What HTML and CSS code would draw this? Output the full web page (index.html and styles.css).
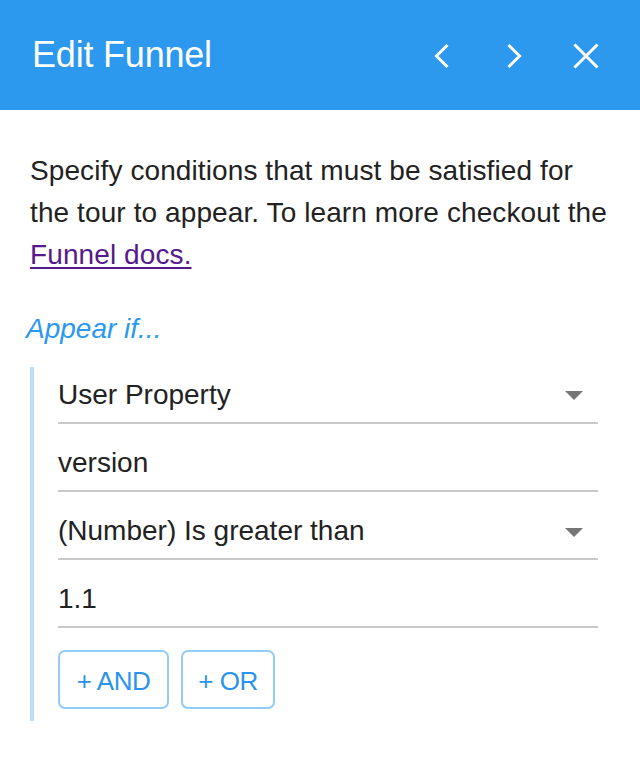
FILE: index.html
```html
<!DOCTYPE html>
<html lang="en">
<head>
<meta charset="utf-8">
<title>Edit Funnel</title>
<link rel="stylesheet" href="styles.css">
</head>
<body>
<div class="panel">
  <header class="header">
    <h1 class="title">Edit Funnel</h1>
    <div class="actions">
      <svg class="icon" width="28" height="28" viewBox="0 0 28 28"><polyline points="19.5,3 8.5,14 19.5,25" fill="none" stroke="#fff" stroke-width="3"/></svg>
      <svg class="icon" width="28" height="28" viewBox="0 0 28 28"><polyline points="8.5,3 19.5,14 8.5,25" fill="none" stroke="#fff" stroke-width="3"/></svg>
      <svg class="icon" width="28" height="28" viewBox="0 0 28 28"><path d="M2.5 2.5 L25.5 25.5 M25.5 2.5 L2.5 25.5" fill="none" stroke="#fff" stroke-width="3"/></svg>
    </div>
  </header>
  <main class="content">
    <p class="intro">Specify conditions that must be satisfied for the tour to appear. To learn more checkout the <a class="link" href="#">Funnel docs.</a></p>
    <div class="appear">Appear if...</div>
    <div class="group">
      <div class="field field-first">
        <span class="value">User Property</span>
        <span class="caret"></span>
      </div>
      <div class="field">
        <span class="value">version</span>
      </div>
      <div class="field">
        <span class="value">(Number) Is greater than</span>
        <span class="caret"></span>
      </div>
      <div class="field">
        <span class="value">1.1</span>
      </div>
      <div class="buttons">
        <button class="btn btn-and">+ AND</button>
        <button class="btn btn-or">+ OR</button>
      </div>
    </div>
  </main>
</div>
</body>
</html>
```

FILE: styles.css
```css
* { box-sizing: border-box; }
html, body {
  margin: 0;
  padding: 0;
  background: #fff;
}
body {
  font-family: "Liberation Sans", Arial, sans-serif;
  color: #222;
}
.panel {
  width: 640px;
}
.header {
  height: 110px;
  background: #2c98ee;
  display: flex;
  align-items: center;
  justify-content: space-between;
  padding: 0 40px 0 32px;
}
.title {
  margin: 0;
  font-size: 36px;
  line-height: 40px;
  font-weight: 400;
  color: #fff;
  letter-spacing: -0.2px;
}
.actions {
  display: flex;
  align-items: center;
  gap: 44px;
  margin-top: 1px;
}
.icon {
  display: block;
}
.content {
  padding: 40px 0 0 0;
}
.intro {
  margin: 0;
  padding: 0 30px;
  font-size: 28px;
  line-height: 42px;
  color: #222;
  letter-spacing: 0.1px;
}
.link {
  color: #551a8b;
  text-decoration: underline;
  text-underline-offset: 3px;
  text-decoration-thickness: 2px;
}
.appear {
  margin-top: 32px;
  padding-left: 26px;
  font-size: 28px;
  line-height: 42px;
  font-style: italic;
  color: #2c98ee;
}
.group {
  margin: 17px 0 0 30px;
  width: 568px;
  border-left: 4px solid #bbdefb;
  padding: 0 0 12px 24px;
}
.field {
  height: 56px;
  margin-top: 12px;
  border-bottom: 2px solid #c9c9c9;
  display: flex;
  align-items: center;
  justify-content: space-between;
  font-size: 28px;
  line-height: 34px;
  color: #222;
}
.field-first {
  margin-top: 0;
  height: 57px;
}
.caret {
  width: 0;
  height: 0;
  border-left: 9px solid transparent;
  border-right: 9px solid transparent;
  border-top: 9px solid #757575;
  margin-right: 15px;
  margin-top: 2px;
}
.buttons {
  display: flex;
  gap: 12px;
  margin-top: 22px;
}
.btn {
  height: 59px;
  border: 2px solid #93ccf9;
  border-radius: 7px;
  background: #fff;
  color: #2b93ec;
  font-family: "Liberation Sans", Arial, sans-serif;
  font-size: 26px;
  padding: 3px 0 0 0;
  white-space: nowrap;
  letter-spacing: -0.5px;
  text-align: center;
}
.btn-and { width: 111px; }
.btn-or { width: 94px; }
```
